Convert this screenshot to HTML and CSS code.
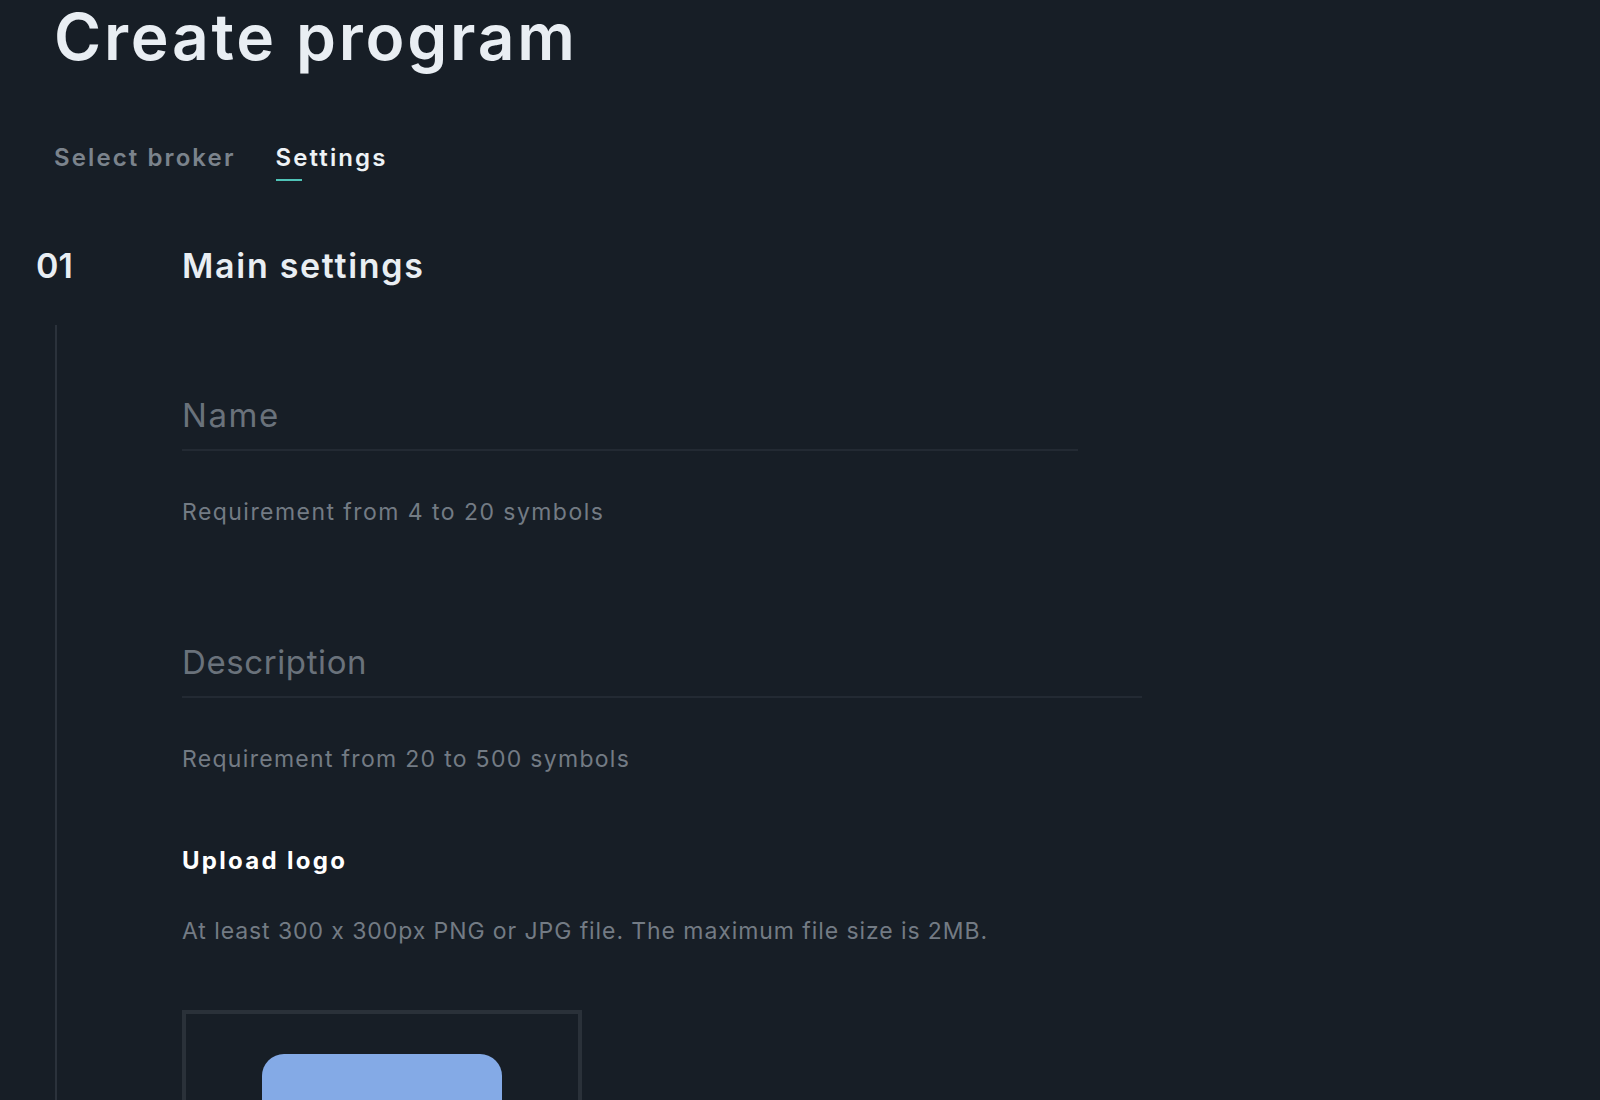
FILE: index.html
```html
<!DOCTYPE html>
<html lang="en">
<head>
<meta charset="utf-8">
<title>Create program</title>
<link rel="stylesheet" href="styles.css">
</head>
<body>
<div class="page">
  <h1 class="title">Create program</h1>
  <nav class="tabs">
    <span class="tab">Select broker</span>
    <span class="tab tab-active">Settings</span>
  </nav>
  <section class="step">
    <div class="step-head">
      <div class="step-num">01</div>
      <h2 class="step-title">Main settings</h2>
    </div>
    <div class="step-body">
      <div class="step-line"></div>
      <div class="step-content">
        <div class="field field-name">
          <div class="field-label">Name</div>
        </div>
        <div class="hint hint-name">Requirement from 4 to 20 symbols</div>
        <div class="field field-desc">
          <div class="field-label">Description</div>
        </div>
        <div class="hint">Requirement from 20 to 500 symbols</div>
        <div class="upload-title">Upload logo</div>
        <div class="hint hint-upload">At least 300 x 300px PNG or JPG file. The maximum file size is 2MB.</div>
        <div class="upload-box">
          <div class="upload-btn"></div>
        </div>
      </div>
    </div>
  </section>
</div>
</body>
</html>
```

FILE: styles.css
```css
html, body {
  margin: 0;
  padding: 0;
  background: #171e26;
  height: 100%;
  overflow: hidden;
}
body {
  font-family: Inter, "Noto Sans", sans-serif;
  font-feature-settings: "calt" 0;
  color: #e9eef3;
}
.page {
  padding: 0 0 0 36px;
}
.title {
  margin: 0 0 0 18px;
  padding-top: 5px;
  font-size: 64px;
  line-height: 64px;
  font-weight: 600;
  letter-spacing: 2.8px;
  color: #e9eef3;
}
.tabs {
  display: flex;
  gap: 40px;
  margin: 74px 0 0 18px;
}
.tab {
  font-size: 24px;
  line-height: 30px;
  font-weight: 600;
  letter-spacing: 2.1px;
  color: #7b838c;
  position: relative;
}
.tab-active {
  color: #eef2f5;
}
.tab-active::after {
  content: "";
  position: absolute;
  left: 0;
  bottom: -8px;
  width: 26px;
  height: 2px;
  background: #4fc3b7;
}
.step {
  margin-top: 73px;
}
.step-head {
  display: flex;
  align-items: baseline;
}
.step-num {
  width: 146px;
  font-size: 34px;
  font-weight: 600;
  line-height: 40px;
}
.step-title {
  margin: 0;
  font-size: 34px;
  font-weight: 600;
  line-height: 40px;
  letter-spacing: 1.7px;
}
.step-body {
  display: flex;
  margin-top: 39px;
}
.step-line {
  width: 2px;
  margin-left: 19px;
  background: #2b323b;
  min-height: 800px;
}
.step-content {
  padding-left: 125px;
  padding-top: 70px;
}
.field {
  border-bottom: 2px solid #232a33;
  padding-bottom: 14px;
}
.field-name {
  width: 896px;
}
.field-desc {
  width: 960px;
  margin-top: 115px;
}
.field-label {
  font-size: 33px;
  line-height: 40px;
  letter-spacing: 0.6px;
  color: #6a727b;
}
.field-name .field-label {
  letter-spacing: 1.6px;
}
.hint {
  margin-top: 46px;
  font-size: 23px;
  line-height: 30px;
  letter-spacing: 1.3px;
  color: #737b84;
}
.hint-name {
  letter-spacing: 1.45px;
}
.upload-title {
  margin-top: 72px;
  font-size: 24px;
  line-height: 30px;
  font-weight: 700;
  letter-spacing: 2.3px;
  color: #ffffff;
}
.hint-upload {
  margin-top: 40px;
  letter-spacing: 0.92px;
}
.upload-box {
  margin-top: 64px;
  width: 392px;
  height: 200px;
  border: 4px solid #2a3139;
  display: flex;
  justify-content: center;
  padding-top: 40px;
  box-sizing: content-box;
}
.upload-btn {
  width: 240px;
  height: 80px;
  background: #84aae6;
  border-radius: 22px;
}
```
